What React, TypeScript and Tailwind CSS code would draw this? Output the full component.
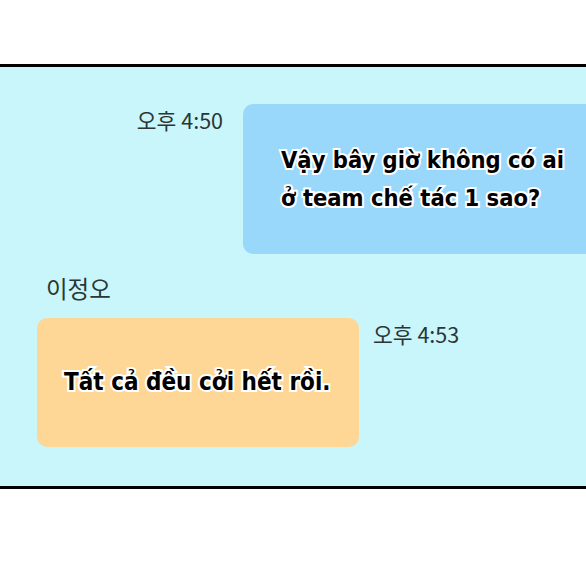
import React from "react";

const outline =
  "whitespace-nowrap [paint-order:stroke_fill] [-webkit-text-stroke:4px_white] [font-family:'DejaVu_Sans_Condensed','DejaVu_Sans',sans-serif] [font-stretch:condensed] font-bold text-black";

export default function App() {
  return (
    <div className="w-[586px] h-[576px] bg-white flex flex-col overflow-hidden">
      <div className="h-[64px] shrink-0" />
      <div className="h-[425px] shrink-0 border-y-[3px] border-black bg-[#c9f6fb] flex flex-col overflow-hidden [font-family:'Noto_Sans_CJK_KR','Noto_Sans',sans-serif]">
        <div className="flex justify-end items-start pt-[37px]">
          <div className="mt-[3px] mr-[20px] text-[21.5px] leading-[26px] font-normal text-[#2b3535]">오후 4:50</div>
          <div className="w-[343px] h-[150px] shrink-0 rounded-l-[10px] bg-[#99d8fb] flex items-center pl-[38px]">
            <div className={`${outline} text-[23.5px] leading-[38px] tracking-[0px]`}>
              <div>Vậy bây giờ không có ai</div>
              <div>ở team chế tác 1 sao?</div>
            </div>
          </div>
        </div>
        <div className="pl-[46px] mt-[18px] text-[23.5px] leading-[32px] font-normal text-[#2b3535]">이정오</div>
        <div className="flex items-start pl-[37px] mt-[14px]">
          <div className="w-[322px] h-[129px] shrink-0 rounded-[10px] bg-[#fed797] flex items-center pl-[27px]">
            <div className={`${outline} text-[24px] leading-[37px] tracking-[0px]`}>Tất cả đều cởi hết rồi.</div>
          </div>
          <div className="ml-[14px] mt-[3px] text-[21.5px] leading-[26px] font-normal text-[#2b3535]">오후 4:53</div>
        </div>
      </div>
    </div>
  );
}
